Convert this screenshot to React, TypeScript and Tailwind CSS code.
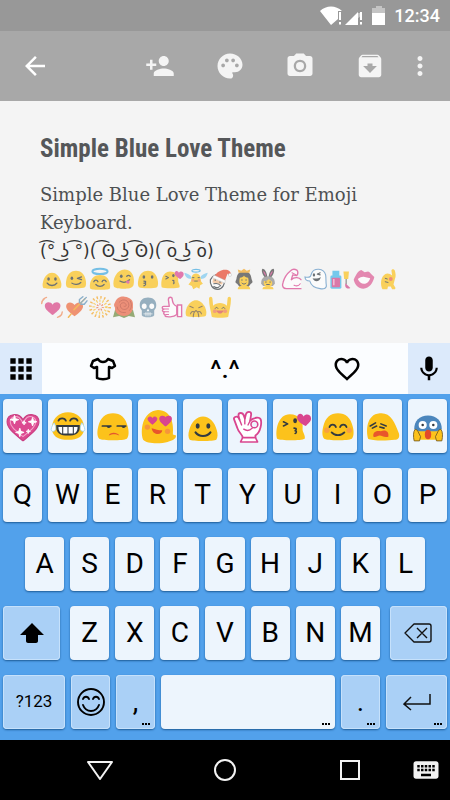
import React from "react";
import {
  MdApps,
  MdArchive,
  MdArrowBack,
  MdFavoriteBorder,
  MdKeyboard,
  MdMic,
  MdMoreVert,
  MdPalette,
  MdPersonAdd,
  MdPhotoCamera,
} from "react-icons/md";

const YELLOW = "#fcc21b";
const INK = "#333a40";
const PINK = "#d9458f";
const BLOB = "M4 29c-2-2-2-7-1-11C5 9 10 5 17 5s12 4 14 13c1 4 1 9-1 11-3 2-23 2-26 0z";
const HEART = "M17 30C11 25 2 19 2 12c0-8 11-9 15-2 4-7 15-6 15 2 0 7-9 13-15 18z";

function Line({ d, w = 1.8, c = INK }: { d: string; w?: number; c?: string }) {
  return <path d={d} fill="none" stroke={c} strokeWidth={w} strokeLinecap="round" strokeLinejoin="round" />;
}

function Blob() {
  return <path d={BLOB} fill={YELLOW} />;
}

function Eyes({ y = 15 }: { y?: number }) {
  return (
    <g fill={INK}>
      <ellipse cx="12" cy={y} rx="1.9" ry="2.5" />
      <ellipse cx="22" cy={y} rx="1.9" ry="2.5" />
    </g>
  );
}

const art: Record<string, React.ReactNode> = {
  smile: (
    <>
      <path d="M4.500 30c-1.500-2-1.500-6-.5-9C6 13 11 8 17 8s11 5 13 13c1 3 1 7-.5 9-2 1.600-23 1.600-25 0z" fill={YELLOW} />
      <Eyes y={17} />
      <Line d="M10 23c3 4.500 11 4.500 14 0" w={2} />
    </>
  ),
  wink: (
    <>
      <Blob />
      <ellipse cx="11" cy="16" rx="1.900" ry="2.500" fill={INK} />
      <Line d="M19 16l6-2M19 16l6 2M11 23c4 3 10 2 13-1" />
    </>
  ),
  halo: (
    <>
      <path d="M3 31c-2-3-1-20 14-20s16 17 14 20c-3 2-25 2-28 0z" fill={YELLOW} />
      <ellipse cx="17" cy="6" rx="11" ry="3.800" fill="none" stroke="#40a9e0" strokeWidth="3" />
      <Line d="M8 21c1-3 5-3 6 0M20 21c1-3 5-3 6 0M11 25c3 3.500 9 3.500 12 0" />
    </>
  ),
  yum: (
    <>
      <path d="M2 27C0 18 6 3 18 3s15 13 13 22c-1 5-6 6-12 6S3 31 2 27z" fill={YELLOW} />
      <ellipse cx="13" cy="13" rx="2" ry="2.500" fill={INK} />
      <Line d="M21 13c2-2 4-1 5 0M11 20c5 3 10 2 14-2" />
      <path d="M20 20c5-3 7 3 3 4-2 0-3-2-3-4z" fill={PINK} />
    </>
  ),
  kiss: (
    <>
      <Blob />
      <ellipse cx="11" cy="14" rx="1.900" ry="2.500" fill={INK} />
      <ellipse cx="23" cy="14" rx="1.900" ry="2.500" fill={INK} />
      <Line d="M11 20c4 0 3 3 0 3 4 0 3 3 0 4" />
    </>
  ),
  kissHeart: (
    <>
      <path d="M2 29C0 21 3 6 14 6c9 0 13 6 12 14 0 3 3 6 2 9-3 2-23 2-26 0z" fill={YELLOW} />
      <Line d="M8 13l4 2-4 2M18 19c3 0 2 2 1 2.500 2 0 1 2.500 0 2.500" w={1.5} />
      <ellipse cx="19" cy="12" rx="1.800" ry="2.300" fill={INK} />
      <path d="M29 17c-4-2-9-5-8-9 1-4 5-3 6 0 2-3 7-2 7 2 0 3-3 5-5 7z" fill={PINK} />
    </>
  ),
  angel: (
    <>
      <path d="M10 17C4 17 1 13 0 8c5 1 9 3 11 7M24 17c6 0 9-4 10-9-5 1-9 3-11 7" fill="#7cc9f0" />
      <path d="M10 20c0-5 1-11 7-11s7 6 7 11l3 4-4 2-1 5-4-2-5 3-2-5-5-2z" fill={YELLOW} />
      <ellipse cx="17" cy="5" rx="6" ry="2" fill="none" stroke="#40a9e0" strokeWidth="1.800" />
      <circle cx="12.500" cy="19" r="2" fill="#f08a4a" />
      <circle cx="21.500" cy="19" r="2" fill="#f08a4a" />
      <Line d="M12 15h2M20 15h2M15 20h4" w={1.4} />
    </>
  ),
  santa: (
    <>
      <path d="M3 18c2-4 5-6 8-7l12 8c2 5-3 13-9 13-8 0-12-7-11-14z" fill="#fff" stroke={INK} strokeWidth="1.800" />
      <path d="M7 16l14 6-1 3-14-3z" fill="#f2b98a" />
      <path d="M9 13C13 5 22 2 28 4c3 1 5 4 5 6l-4 1-1-2-4 11z" fill="#e8442c" />
      <path d="M8 11l17 8-1 4L6 15z" fill="#fff" stroke="#9a9a9a" strokeWidth=".6" />
      <circle cx="31.500" cy="11" r="2.300" fill="#fff" stroke="#9a9a9a" strokeWidth=".6" />
      <Line d="M10 18v1M17 21v1M8 24c4-1 8 0 10 3M8 28c3 2 6 2 8 0" w={1.6} />
    </>
  ),
  princess: (
    <>
      <path d="M7 24C3 22 5 20 6 17 7 8 11 6 17 6s10 2 11 11c1 3 3 5-1 7l-4 5H11z" fill="#454545" />
      <path d="M11 15c3 0 5-1 6-3 1 2 3 3 6 3 2 9-1 11-3 12 5 0 6 2 6 5H8c0-3 1-5 6-5-2-1-5-3-3-12z" fill={YELLOW} />
      <path d="M9 8l-1-5 5 2 4-3 4 3 5-2-1 5z" fill="#f5a623" />
      <Line d="M14 18v1M20 18v1M14 23c2 2 4 2 6 0" w={1.4} />
    </>
  ),
  bunny: (
    <>
      <path d="M14 16C8 11 7 3 9 2c4 0 7 7 7 13zM20 16c6-5 7-13 5-14-4 0-7 7-7 13z" fill="#454545" />
      <path d="M14 13c-3-3-4-7-4-8 3 2 4 5 4 8zM20 13c3-3 4-7 4-8-3 2-4 5-4 8z" fill={PINK} />
      <path d="M7 24c0-7 3-11 10-11s10 4 10 11l-3 3H10z" fill="#8b8b8b" />
      <path d="M11 20c4 0 6-1 7-3l5 4c1 4-1 6-3 7 4 0 5 2 5 4H9c0-2 1-4 5-4-2-1-4-3-3-8z" fill={YELLOW} />
      <Line d="M14 21v1M20 21v1M15 25h4" w={1.4} />
    </>
  ),
  muscle: (
    <>
      <path d="M30 31H9c-5 0-7-4-5-9C6 14 10 9 15 5c3-3 7-2 9-1 2 2 2 6 0 8l-6-1-2 7c5-5 12-3 14 0" fill="#fff" stroke={PINK} strokeWidth="2" strokeLinecap="round" strokeLinejoin="round" />
      <Line d="M17 8l6 3M20 26c4 2 7 1 9-2" c={PINK} w={1.6} />
    </>
  ),
  ghost: (
    <>
      <path d="M11 8c3-7 17-8 20 3 1 6 0 10 1 15 1 5-5 6-9 5-8-1-13-4-15-11-5 0-7-3-7-6 4 1 7 0 8-1z" fill="#fff" stroke="#5b93c4" strokeWidth="1.600" />
      <path d="M12 16c5 1 9 0 12-2-1 7-9 9-12 2z" fill={INK} />
      <ellipse cx="14" cy="11" rx="1.700" ry="2.500" fill={INK} />
      <Line d="M19 10l4-2M19 10l4 1" />
    </>
  ),
  polish: (
    <>
      <path d="M6 5h10v9H6z" fill="#40b8ea" />
      <rect x="3" y="12" width="16" height="19" rx="2" fill="#40b8ea" />
      <rect x="5" y="15" width="12" height="14" rx="1" fill="#d04488" />
      <path d="M7 17h2v9H7z" fill="#f6b3d2" />
      <path d="M22 6h8l-1 11h-6z" fill={YELLOW} />
      <path d="M25 17h2v8h-2z" fill="#777" />
      <path d="M25 23l7 7c-4 2-9 0-7-7z" fill="#d04488" />
    </>
  ),
  lips: (
    <>
      <path d="M2 18C5 12 8 5 13 4l5 3 5-1c3 1 5 5 9 8-2 9-7 16-16 17C9 31 4 26 2 18z" fill="#dd5b94" />
      <path d="M8 17c4-3 7-4 10-3l8 2c-2 6-5 8-9 8s-7-3-9-7z" fill="#fff" />
    </>
  ),
  raised: (
    <>
      <path d="M8 30c-3-9 0-20 8-21 3 0 5 1 7 3l-1-7c0-3 4-3 5 0 1 4 2 8 0 12l-2 8 3 5-1 2h-4l-2-4h-4l-1 4H9z" fill={YELLOW} />
      <circle cx="21" cy="17" r="2.800" fill="#ee6044" />
      <Line d="M13 16l3 1M13 21l4 1" w={1.4} />
    </>
  ),
  beating: (
    <>
      <g transform="translate(5 6) scale(.76)"><path d={HEART} fill="#d94486" /></g>
      <Line d="M6 5C3 7 2 9 2 12M9 3C6 4 5 5 4 6M28 31c3-2 4-4 4-7M25 32c3-1 4-2 5-3" c="#f08c5b" w={2} />
    </>
  ),
  arrowHeart: (
    <>
      <g transform="translate(1 6) scale(.82)"><path d={HEART} fill="#ee6a3c" /></g>
      <Line d="M6 32l4-5M14 21L30 5" c="#f3a21d" w={2.2} />
      <Line d="M22 11V6l5-4M24 13h5l4-5M24 11l8-8" c="#5f93b8" w={2} />
    </>
  ),
  sparkler: (
    <g fill="none" stroke="#f5a623">
      <circle cx="17" cy="17" r="14" strokeWidth="4" strokeDasharray="2 3.500" />
      <circle cx="17" cy="17" r="9" strokeWidth="4" strokeDasharray="1.500 3" stroke="#fbbf2d" />
      <circle cx="17" cy="17" r="4" strokeWidth="3" strokeDasharray="1.500 2" stroke="#ee6a3c" />
    </g>
  ),
  rose: (
    <>
      <path d="M1 32l3-11h26l3 11-9-2-7 3-7-3z" fill="#6d8b40" />
      <path d="M4 10C7 3 13 1 18 2c8 1 13 5 12 13 1 8-5 15-13 15S3 24 4 18c-2-3-2-5 0-8z" fill="#ea6544" />
      <Line d="M10 10c6-7 15-2 14 5s-10 7-12 2 4-8 7-5 0 5-2 4M7 17c1 6 6 9 12 8M26 8c3 5 2 11-1 14" c="#b8432d" w={1.3} />
    </>
  ),
  skull: (
    <>
      <path d="M5 14C5 7 10 3 17 3s12 4 12 11c0 5-2 6-3 8v7c-2 4-16 4-18 0v-7c-1-2-3-3-3-8z" fill="#6f93aa" />
      <ellipse cx="11.500" cy="16" rx="3.500" ry="4" fill="#fff" />
      <ellipse cx="22.500" cy="16" rx="3.500" ry="4" fill="#fff" />
      <path d="M17 19l2 4h-4z" fill="#fff" />
      <Line d="M11 27h12M14 25v5M17 25v5M20 25v5" c="#fff" w={1} />
    </>
  ),
  thumb: (
    <>
      <path d="M24 16c-5-2-6-5-7-12-3-3-6 0-5 4l1 8H5c-3 0-3 4 0 4-3 1-2 4 1 4-2 1-1 4 1 4-1 2 1 3 3 3 7 1 11 0 14-3z" fill="#fff" stroke={PINK} strokeWidth="2" strokeLinejoin="round" />
      <path d="M25 14h6v17h-6z" fill="#fff" stroke={PINK} strokeWidth="2" />
      <Line d="M5 20h7M6 24h6M8 28h4" c={PINK} w={1.5} />
    </>
  ),
  pray: (
    <>
      <path d="M3 30C-1 22 7 7 17 7s18 15 14 23c-4 2-24 2-28 0z" fill={YELLOW} />
      <Line d="M8 16l5 2M26 16l-5 2M13 31c0-4 1-7 4-9 3 2 4 5 4 9M9 27c1-3 3-4 5-3M25 27c-1-3-3-4-5-3" c="#6f5530" w={1.5} />
    </>
  ),
  hooray: (
    <>
      <path d="M5 31C4 24 1 15 1 5c0-4 5-4 5 0l1 10c5-5 15-5 20 0l1-10c0-4 5-4 5 0 0 10-3 19-4 26-3 2-21 2-24 0z" fill={YELLOW} />
      <circle cx="9.500" cy="23" r="2.800" fill="#f07a4d" />
      <circle cx="24.500" cy="23" r="2.800" fill="#f07a4d" />
      <path d="M12 22h10c-1 6-9 6-10 0z" fill="#d9504a" />
      <Line d="M10 19c1-2 3-2 4 0M20 19c1-2 3-2 4 0" w={1.4} />
    </>
  ),
  sparkHeart: (
    <>
      <g transform="translate(0 1)"><path d={HEART} fill="#dc4a91" stroke="#c93d80" /></g>
      <path d="M17 27C11 22 5 18 5 13c0-5 7-7 10-2l2 3 2-3c3-5 10-3 10 2 0 5-6 9-12 14z" fill="none" stroke="#f3a3c9" strokeWidth="1" />
      <path d="M9 7l1 3 3 1-3 1-1 3-1-3-3-1 3-1zM26 9l1 3 3 1-3 1-1 3-1-3-3-1 3-1zM14 19l1 3 3 1-3 1-1 3-1-3-3-1 3-1zM18 12l.5 1.500 1.500.5-1.500.5-.5 1.500-.5-1.500-1.500-.5 1.500-.5zM22 20l.5 1.500 1.500.5-1.500.5-.5 1.500-.5-1.500-1.500-.5 1.500-.5z" fill="#fff" stroke="#fff" strokeWidth=".8" />
    </>
  ),
  joy: (
    <>
      <path d="M2 17C3 9 9 4 17 4s14 5 15 13c1 10-6 13-15 13S1 27 2 17z" fill={YELLOW} />
      <Line d="M8 12c1-3 6-3 7 0M19 12c1-3 6-3 7 0" w={1.7} />
      <path d="M6 16h22c1 8-4 10-11 10S5 24 6 16z" fill={INK} />
      <path d="M8 18h18c0 3-1 5-3 6H11c-2-1-3-3-3-6z" fill="#fff" />
      <Line d="M12 18v6M17 18v6M22 18v6" w={1} />
      <path d="M4 14c-3 4-4 8-1 8s3-4 1-8zM30 14c3 4 4 8 1 8s-3-4-1-8z" fill="#fff" stroke="#9fd4f3" strokeWidth=".8" />
    </>
  ),
  unamused: (
    <>
      <Blob />
      <Line d="M7 17h8M21 17h8" w={1.6} />
      <path d="M11 17h4c0 2.500-4 2.500-4 0zM25 17h4c0 2.500-4 2.500-4 0z" fill={INK} />
      <path d="M13 26c1-3.500 8-3.500 10 0-4-1.500-6-1.500-10 0z" fill="#e4572e" />
    </>
  ),
  loveEyes: (
    <>
      <path d="M3 30C0 22 2 3 17 2c13 0 15 14 14 23l3 1c0 4-5 5-8 6-6 2-20 2-23-2z" fill={YELLOW} />
      <g transform="translate(7 7) scale(.28)"><path d={HEART} fill={PINK} stroke={PINK} strokeWidth="3" /></g>
      <g transform="translate(18 6) scale(.36)"><path d={HEART} fill={PINK} stroke={PINK} strokeWidth="3" /></g>
      <circle cx="7" cy="18" r="2.500" fill="#f6953b" />
      <circle cx="26" cy="22" r="2.500" fill="#f6953b" />
      <path d="M11 19c4 1 6 2 10 2 0 5-9 5-10-2z" fill="#e8562b" />
    </>
  ),
  okHand: (
    <>
      <path d="M12 28c0-3-4-5-5-9L4 11c-1-2 2-4 4-2l1 2-1-4c0-3 4-3 5 0l1 3 1-4c1-3 5-3 5 0l-1 6c3-3 9-4 10-1s0 12-5 15v2z" fill="#fff" stroke={PINK} strokeWidth="1.700" strokeLinejoin="round" />
      <circle cx="23" cy="15.500" r="3.200" fill="#edf5fd" stroke={PINK} strokeWidth="1.500" />
      <path d="M12 28h12l2 4H10z" fill="#fff" stroke={PINK} strokeWidth="1.500" strokeLinejoin="round" />
      <Line d="M9 11l2 5M14 10v5M19 12l-2 4M13 20c3 2 6 1 8-1" c={PINK} w={1.3} />
    </>
  ),
  blush: (
    <>
      <Blob />
      <circle cx="6.500" cy="21" r="2.600" fill="#f8a13f" />
      <circle cx="27.500" cy="21" r="2.600" fill="#f8a13f" />
      <Line d="M9 18c1-3 5-3 6 0M19 18c1-3 5-3 6 0M11 23c3 3.500 9 3.500 12 0" w={1.7} />
    </>
  ),
  tired: (
    <>
      <path d="M3 29C1 22 1 6 14 5c10-1 14 8 18 19 1 4-1 6-4 6-8 1-22 1-25-1z" fill={YELLOW} />
      <Line d="M5 17l5-3M7 19l4-2M15 15l5 2M14 18l4 1" w={1.5} />
      <path d="M8 27c-1-5 4-6 7-5 4-2 8 0 7 5-4 1-6-1-8-1s-4 2-6 1z" fill="#e8562b" />
    </>
  ),
  scream: (
    <>
      <path d="M5 20C5 12 9 8 17 8s12 4 12 12l1 10H4z" fill={YELLOW} />
      <path d="M4 20C4 12 9 7 17 7s13 5 13 13l-5 2H9z" fill="#4b86bd" />
      <circle cx="12" cy="16" r="3.800" fill="#fff" />
      <circle cx="22" cy="16" r="3.800" fill="#fff" />
      <circle cx="12" cy="16" r="1.200" fill={INK} />
      <circle cx="22" cy="16" r="1.200" fill={INK} />
      <ellipse cx="17" cy="25" rx="3" ry="4.500" fill="#e24a2a" />
      <path d="M4 31c-1-4-1-9 1-11l2 1 3 6-1 4zM30 31c1-4 1-9-1-11l-2 1-3 6 1 4z" fill={YELLOW} stroke="#705823" strokeWidth=".8" />
    </>
  ),
};

function Emoji({ name, className }: { name: string; className: string }) {
  return (
    <svg viewBox="1 1 32 32" className={`overflow-visible ${className}`} role="img" aria-label={name}>
      {art[name]}
    </svg>
  );
}

const noteEmoji = [
  ["smile", "wink", "halo", "yum", "kiss", "kissHeart", "angel", "santa", "princess", "bunny", "muscle", "ghost", "polish", "lips", "raised"],
  ["beating", "arrowHeart", "sparkler", "rose", "skull", "thumb", "pray", "hooray"],
];
const keyEmoji = ["sparkHeart", "joy", "unamused", "loveEyes", "smile", "okHand", "kissHeart", "blush", "tired", "scream"];

function StatusBar() {
  return (
    <div className="flex h-[31px] items-center justify-end bg-[#989898] pr-[10px] text-white">
      <svg viewBox="0 0 66 20" className="h-5 w-[66px]" role="img" aria-label="Wi-Fi, signal and battery">
        <path d="M0 5C6-1 16-1 22 5h-4v8l-7 6z" fill="#fff" />
        <path d="M19 6h2v8h-2zM19 16h2v2.500h-2z" fill="#fff" />
        <path d="M42 1v6h-5v6l5-4z" fill="#c4c4c4" />
        <path d="M25 19L38 6v13z" fill="#fff" />
        <path d="M40 6h2v8h-2zM40 16h2v2.500h-2z" fill="#fff" />
        <path d="M56 0h6v2h3v5H52V2h4z" fill="#c4c4c4" />
        <path d="M52 7h13v12H52z" fill="#fff" />
      </svg>
      <time className="ml-2 text-lg leading-none font-medium">12:34</time>
    </div>
  );
}

function AppBar() {
  return (
    <header className="flex h-[70px] items-center bg-[#a8a8a8] pr-[15px] pl-5 text-[#f4f4f4]">
      <button aria-label="Back" className="text-white"><MdArrowBack size={30} /></button>
      <div className="ml-auto flex gap-10">
        <button aria-label="Add person"><MdPersonAdd size={30} /></button>
        <button aria-label="Change colour"><MdPalette size={30} /></button>
        <button aria-label="Take photo"><MdPhotoCamera size={30} /></button>
        <button aria-label="Archive"><MdArchive size={30} /></button>
      </div>
      <button aria-label="More options" className="ml-5"><MdMoreVert size={30} /></button>
    </header>
  );
}

function Note() {
  return (
    <main className="bg-[#f4f4f4] px-10 pt-8 pb-[22px]">
      <h1 className="font-['Roboto_Condensed','Liberation_Sans_Narrow',Roboto,sans-serif] text-[25px] leading-8 font-bold text-[#555759]">
        Simple Blue Love Theme
      </h1>
      <p className="mt-4 font-['Roboto_Slab','DejaVu_Serif',serif] text-lg leading-7 text-[#4d5052]">
        Simple Blue Love Theme for Emoji Keyboard.
      </p>
      <p className="font-['DejaVu_Sans',sans-serif] text-[17px] leading-7 whitespace-nowrap text-[#333]">
        (͡° ͜ʖ ͡°)( ͡ʘ ͜ʖ ͡ʘ)( ͡o ͜ʖ ͡o)
      </p>
      {noteEmoji.map((row, i) => (
        <div key={i} className="flex h-7 items-center opacity-70">
          {row.map((name) => (
            <Emoji key={name} name={name} className="h-[22px] w-6 shrink-0" />
          ))}
        </div>
      ))}
    </main>
  );
}

function SuggestionBar() {
  return (
    <div className="flex h-[51px] bg-[#fbfdff] text-black">
      <button aria-label="All panels" className="flex w-[42px] items-center justify-center bg-[#dceafb]">
        <MdApps size={32} />
      </button>
      <button aria-label="Themes" className="flex flex-1 items-center justify-center">
        <svg viewBox="0 0 28 24" className="h-6 w-7" fill="none" stroke="currentColor" strokeWidth="2.500" strokeLinejoin="round">
          <path d="M9 2L4 4 2 9l3 2 3-1v11c3 1.500 9 1.500 12 0V10l3 1 3-2-2-5-5-2c-2 4-8 4-10 0z" />
        </svg>
      </button>
      <button aria-label="Emoticons" className="flex-1 text-[26px] leading-none font-medium">^.^</button>
      <button aria-label="Favourites" className="flex flex-1 items-center justify-center">
        <MdFavoriteBorder size={30} />
      </button>
      <button aria-label="Voice input" className="flex w-[42px] items-center justify-center bg-[#dceafb]">
        <MdMic size={30} />
      </button>
    </div>
  );
}

const keyBase = "relative flex h-[54px] min-w-0 items-center justify-center rounded text-black shadow-[0_1px_2px_#1d5b96]";
const lightKey = "bg-[#edf5fd] text-[28px] leading-none";
const blueKey = "inset-ring inset-ring-[#c6e1fb] bg-[#aad0f6]";

function Key({ label, className, children }: { label: string; className: string; children?: React.ReactNode }) {
  return (
    <button aria-label={label} className={`${keyBase} ${className}`}>
      {children}
    </button>
  );
}

function Dots() {
  return (
    <span className="absolute right-[5px] bottom-1 flex gap-px" aria-hidden="true">
      <i className="size-[2px] bg-black" />
      <i className="size-[2px] bg-black" />
      <i className="size-[2px] bg-black" />
    </span>
  );
}

function Letters({ keys }: { keys: string }) {
  return (
    <>
      {keys.split("").map((k) => (
        <Key key={k} label={k} className={`flex-1 ${lightKey}`}>{k}</Key>
      ))}
    </>
  );
}

function Keyboard() {
  return (
    <div className="flex flex-col gap-[15px] bg-[#52a1eb] px-[3px] pt-[5px] pb-[11px]">
      <div className="flex gap-[6px]">
        {keyEmoji.map((name) => (
          <Key key={name} label={name} className="flex-1 bg-[#edf5fd]">
            <Emoji name={name} className="size-[34px]" />
          </Key>
        ))}
      </div>
      <div className="flex gap-[6px]"><Letters keys="QWERTYUIOP" /></div>
      <div className="flex gap-[6px] px-[22px]"><Letters keys="ASDFGHJKL" /></div>
      <div className="flex gap-[10px]">
        <Key label="Shift" className={`flex-[57] ${blueKey}`}>
          <svg viewBox="0 0 24 20" className="h-5 w-6"><path d="M12 0l12 12h-6v6c0 1-1 2-2 2H8c-1 0-2-1-2-2v-6H0z" /></svg>
        </Key>
        <div className="flex flex-[309] gap-[6px]"><Letters keys="ZXCVBNM" /></div>
        <Key label="Backspace" className={`flex-[57] ${blueKey}`}>
          <svg viewBox="0 0 28 20" className="h-5 w-7" fill="none" stroke="#111" strokeWidth="1.400" strokeLinejoin="round">
            <path d="M1 10l9-9h15c1.500 0 2 .5 2 2v14c0 1.500-.5 2-2 2H10zM13 5l10 10M23 5L13 15" />
          </svg>
        </Key>
      </div>
      <div className="flex gap-[6px]">
        <Key label="Symbols" className={`flex-[62] text-[17px] ${blueKey}`}>?123</Key>
        <Key label="Emoji" className={`flex-[39] ${blueKey}`}>
          <svg viewBox="0 0 30 30" className="size-[30px] shrink-0" fill="none" stroke="#000" strokeWidth="1.900" strokeLinecap="round">
            <circle cx="15" cy="15" r="13" />
            <path d="M7 12c1-3 5-3 6 0M17 12c1-3 5-3 6 0M7 18c3 8 13 8 16 0" />
          </svg>
        </Key>
        <Key label="Comma" className={`flex-[39] text-[28px] ${blueKey}`}>,<Dots /></Key>
        <Key label="Space" className={`flex-[174] ${lightKey}`}><Dots /></Key>
        <Key label="Full stop" className={`flex-[39] text-[28px] ${blueKey}`}>.<Dots /></Key>
        <Key label="Enter" className={`flex-[61] ${blueKey}`}>
          <svg viewBox="0 0 28 18" className="h-[18px] w-7" fill="none" stroke="#111" strokeWidth="1.500">
            <path d="M27 1v10H1M8 4l-7 7 7 6" />
          </svg>
          <Dots />
        </Key>
      </div>
    </div>
  );
}

function NavBar() {
  return (
    <nav className="grid h-[60px] grid-cols-[25px_1fr_1fr_1fr_25px] items-center justify-items-center bg-black px-3 text-[#f2f2f2]">
      <button aria-label="Hide keyboard" className="col-start-2">
        <svg viewBox="0 0 26 20" className="h-5 w-[26px]" fill="none" stroke="currentColor" strokeWidth="2" strokeLinejoin="round">
          <path d="M1 2h24L13 19z" />
        </svg>
      </button>
      <button aria-label="Home" className="size-[22px] rounded-full border-2 border-current" />
      <button aria-label="Recent apps" className="size-5 border-2 border-current" />
      <button aria-label="Switch keyboard"><MdKeyboard size={30} /></button>
    </nav>
  );
}

export default function App() {
  return (
    <div className="w-full overflow-hidden bg-black font-[Roboto,sans-serif]">
      <StatusBar />
      <AppBar />
      <Note />
      <SuggestionBar />
      <Keyboard />
      <NavBar />
    </div>
  );
}
